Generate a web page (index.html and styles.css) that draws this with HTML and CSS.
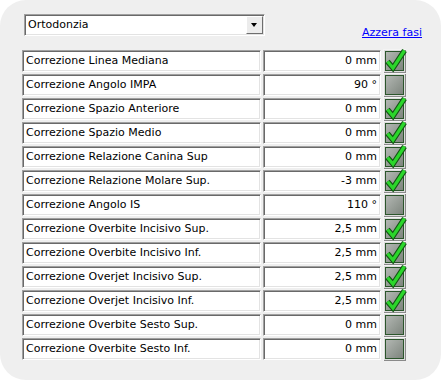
FILE: index.html
```html
<!DOCTYPE html>
<html lang="it">
<head>
    <meta charset="UTF-8">
    <title>Ortodonzia</title>
    <link rel="stylesheet" href="styles.css">
</head>
<body>
    <div class="panel">
        <div class="top">
            <div class="combo">
                <span class="combo-text">Ortodonzia</span>
                <span class="arrow"></span>
            </div>
            <a href="#" class="reset">Azzera fasi</a>
        </div>
        <div class="rows" id="rows"></div>
    </div>
    <script>
        // righe: etichetta, valore, spunta
        var data = [
            ['Correzione Linea Mediana', '0 mm', true],
            ['Correzione Angolo IMPA', '90 °', false],
            ['Correzione Spazio Anteriore', '0 mm', true],
            ['Correzione Spazio Medio', '0 mm', true],
            ['Correzione Relazione Canina Sup', '0 mm', true],
            ['Correzione Relazione Molare Sup.', '-3 mm', true],
            ['Correzione Angolo IS', '110 °', false],
            ['Correzione Overbite Incisivo Sup.', '2,5 mm', true],
            ['Correzione Overbite Incisivo Inf.', '2,5 mm', true],
            ['Correzione Overjet Incisivo Sup.', '2,5 mm', true],
            ['Correzione Overjet Incisivo Inf.', '2,5 mm', true],
            ['Correzione Overbite Sesto Sup.', '0 mm', false],
            ['Correzione Overbite Sesto Inf.', '0 mm', false]
        ];

        var box = '<svg class="check" width="23" height="24" viewBox="0 0 23 24">' +
            '<defs><linearGradient id="g" x1="0" y1="0" x2="1" y2="1">' +
            '<stop offset="0" stop-color="#b4b9b4"/><stop offset="1" stop-color="#7c837c"/></linearGradient></defs>' +
            '<rect x="0" y="0" width="23" height="24" fill="#f4f4f4"/>' +
            '<rect x="1" y="1" width="22" height="23" fill="#8a8a8a"/>' +
            '<rect x="1" y="1" width="21" height="22" fill="#dcdcdc"/>' +
            '<rect x="2.5" y="2.5" width="18" height="19" fill="url(#g)" stroke="#2b552b"/>';
        var tick = '<path d="M4.5 12.5 L10 19 L21.5 1.5" fill="none" stroke="#145214" stroke-width="5.5" stroke-linejoin="miter"/>' +
            '<path d="M4.5 12.5 L10 19 L21.5 1.5" fill="none" stroke="#2bd62b" stroke-width="3.2"/>';

        var html = '';
        for (var i = 0; i < data.length; i++) {
            html += '<div class="row">' +
                '<div class="field label">' + data[i][0] + '</div>' +
                '<div class="field value">' + data[i][1] + '</div>' +
                box + (data[i][2] ? tick : '') + '</svg>' +
                '</div>';
        }
        document.getElementById('rows').innerHTML = html;
    </script>
</body>
</html>
```

FILE: styles.css
```css
html, body { margin: 0; padding: 0; background: #fff; }
body { font-family: "DejaVu Sans", sans-serif; font-size: 11px; color: #000; }
.panel { box-sizing: border-box; width: 441px; height: 380px; background: #efefef; border-radius: 26px; padding: 14px 0 0 22px; }
.top { display: flex; align-items: flex-start; }
.combo { box-sizing: border-box; display: flex; align-items: center; width: 241px; height: 22px; margin-left: 2px; background: #fff; border: 1px solid; border-color: #a0a0a0 #fff #fff #a0a0a0; box-shadow: inset 1px 1px #696969, inset -1px -1px #e3e3e3; padding: 2px 2px 2px 3px; }
.combo-text { flex: 1; line-height: 16px; }
.arrow { position: relative; box-sizing: border-box; width: 17px; height: 18px; margin-right: -1px; background: #ececec; border: 1px solid; border-color: #fff #6e6e6e #6e6e6e #fff; }
.arrow::after { content: ''; position: absolute; left: 4px; top: 6px; border-left: 3.5px solid transparent; border-right: 3.5px solid transparent; border-top: 4px solid #000; }
.reset { margin: 12px 19px 0 auto; color: #0000ff; text-decoration: underline; line-height: 13px; }
.rows { display: flex; flex-direction: column; gap: 2px; margin-top: 11px; }
.row { display: flex; align-items: center; height: 22px; }
.field { box-sizing: border-box; height: 22px; line-height: 16px; background: #fff; border: 1px solid; border-color: #a0a0a0 #fff #fff #a0a0a0; box-shadow: inset 1px 1px #696969, inset -1px -1px #e3e3e3; padding: 2px 3px; white-space: nowrap; }
.label { width: 239px; }
.value { width: 118px; margin-left: 2px; text-align: right; }
.check { margin: -1px 0 -1px 2px; overflow: visible; }
```
